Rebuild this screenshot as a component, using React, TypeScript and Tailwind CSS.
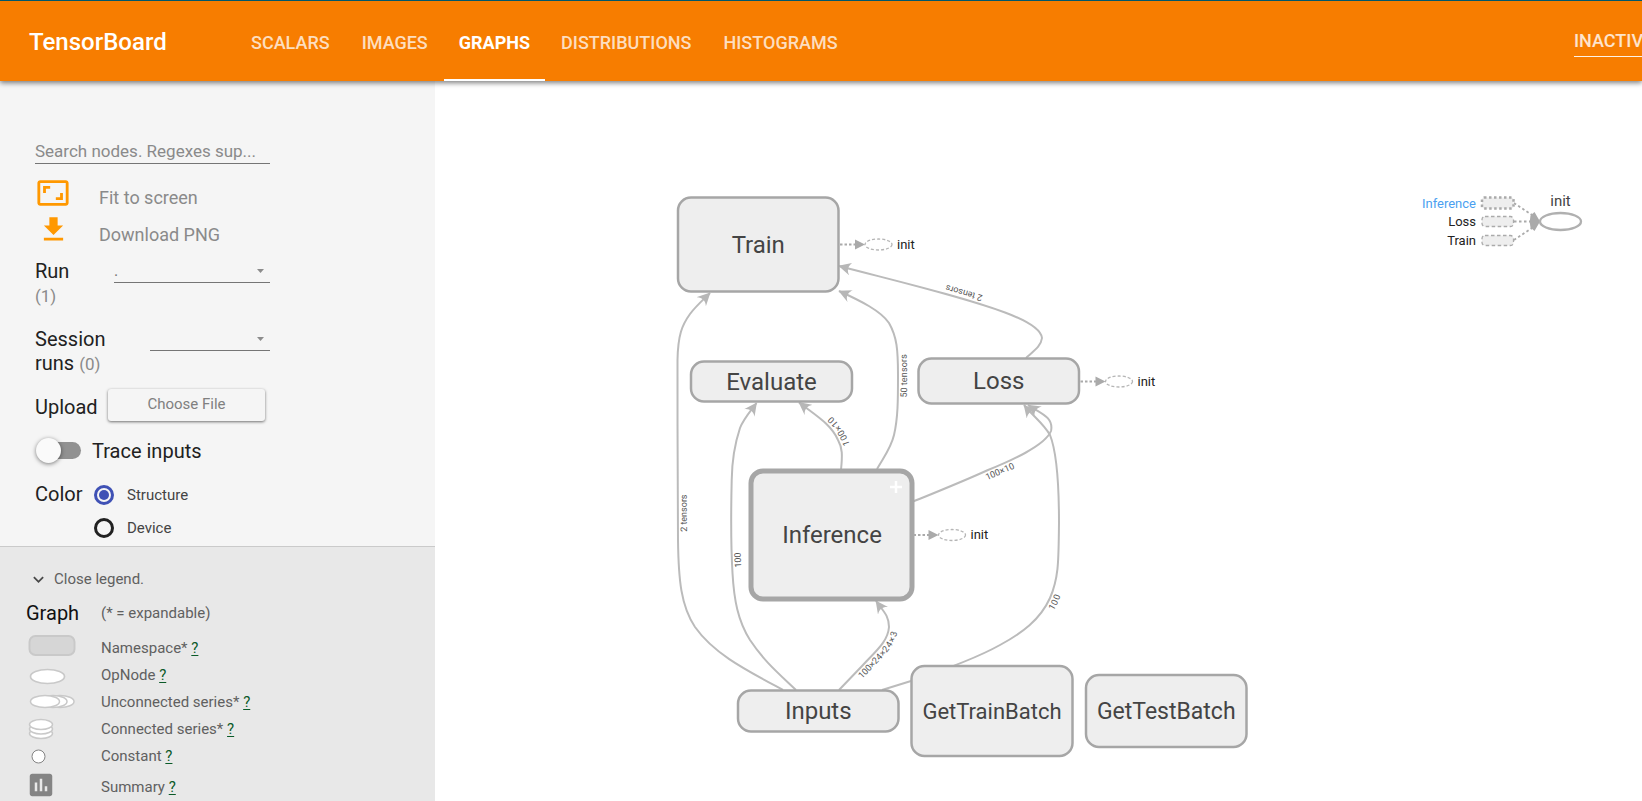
import React from "react";
import { MdAspectRatio, MdGetApp, MdKeyboardArrowDown, MdAssessment } from "react-icons/md";

const tabs = ["SCALARS", "IMAGES", "GRAPHS", "DISTRIBUTIONS", "HISTOGRAMS"];

function Header() {
  return (
    <header className="relative z-10 flex h-[81px] shrink-0 items-stretch overflow-visible border-t border-[#00576b] bg-[#f77d00] shadow-[0_2px_5px_rgba(0,0,0,0.5)]">
      <h1 className="flex w-[235px] shrink-0 items-center pt-0.5 pl-[29px] text-[24px] font-medium text-white">TensorBoard</h1>
      <nav className="flex">
        {tabs.map((tab) => (
          <a
            key={tab}
            href={"#" + tab.toLowerCase()}
            aria-current={tab === "GRAPHS" ? "page" : undefined}
            className={
              tab === "GRAPHS"
                ? "flex items-center border-b-2 border-white px-[15px] pt-1 text-[18px] font-bold text-white"
                : "flex items-center border-b-2 border-transparent px-4 pt-1 text-[18px] font-medium text-white/75"
            }
          >
            {tab}
          </a>
        ))}
      </nav>
      <div className="ml-auto w-[68px] overflow-hidden">
        <button className="mt-[26px] h-[30px] w-[160px] border-b border-white/90 pb-0.5 text-left text-[18px] font-medium text-white/80">
          INACTIVE
        </button>
      </div>
    </header>
  );
}

function Dropdown({ id, options }: { id: string; options: string[] }) {
  return (
    <div className="relative flex-1">
      <select id={id} className="block h-6 w-full appearance-none border-b border-[#757575] bg-transparent text-[16px] text-[#757575] outline-none">
        {options.map((o) => (
          <option key={o}>{o}</option>
        ))}
      </select>
      <svg className="pointer-events-none absolute top-[10px] right-[6px]" width="7" height="4" viewBox="0 0 7 4">
        <path d="M0 0H7L3.5 4Z" fill="#8c8c8c" />
      </svg>
    </div>
  );
}

function Controls() {
  return (
    <section className="h-[465px] shrink-0 pt-[57px] pl-[35px] text-[20px] leading-6 text-[#212121]">
      <div className="w-[235px]">
        <input
          aria-label="Search nodes"
          placeholder="Search nodes. Regexes sup..."
          className="block h-[26px] w-full border-b border-[#757575] bg-transparent text-[17px] outline-none placeholder:text-[#8a8a8a]"
        />
        <button className="mt-2.5 flex h-[37px] w-full items-center text-[18px] text-[#8a8a8a]">
          <MdAspectRatio className="ml-px size-[34px] text-[#ff9800]" />
          <span className="ml-[29px] pt-[11px]">Fit to screen</span>
        </button>
        <button className="flex h-[37px] w-full items-center text-[18px] text-[#8a8a8a]">
          <MdGetApp className="ml-0.5 size-[33px] text-[#ff9800]" />
          <span className="ml-[29px] pt-[11px]">Download PNG</span>
        </button>
        <div className="mt-[11px] flex h-12">
          <label htmlFor="run" className="w-[79px]">
            Run <br />
            <span className="text-[17px] leading-none text-[#8a8a8a]">(1)</span>
          </label>
          <Dropdown id="run" options={["."]} />
        </div>
        <div className="mt-5 flex h-12">
          <label htmlFor="session" className="w-[115px]">
            Session <br />
            runs <span className="text-[17px] leading-none text-[#8a8a8a]">(0)</span>
          </label>
          <Dropdown id="session" options={[""]} />
        </div>
        <div className="mt-3.5 flex h-8 items-center">
          <span className="w-[73px] pt-1">Upload</span>
          <button className="h-8 w-[157px] rounded-[3px] bg-[#f5f5f5] pb-0.5 text-[15px] text-[#808080] shadow-[0_1px_3px_rgba(0,0,0,0.55)]">
            Choose File
          </button>
        </div>
        <label className="mt-[17px] flex h-[25px] items-center">
          <input type="checkbox" role="switch" className="peer sr-only" />
          <span className="ml-[9px] flex h-[17px] w-[37px] items-center rounded-full bg-[#919191]">
            <span className="-ml-2 size-[25px] shrink-0 rounded-full bg-[#fafafa] shadow-[0_1px_4px_rgba(0,0,0,0.5)]" />
          </span>
          <span className="ml-[11px]">Trace inputs</span>
        </label>
        <fieldset className="mt-[15px] flex">
          <legend className="float-left h-[33px] w-[59px] pt-1">Color</legend>
          <div className="text-[15px] text-[#444]">
            <label className="flex h-[33px] items-center gap-[13px]">
              <input
                type="radio"
                name="color"
                defaultChecked
                className="size-5 appearance-none rounded-full border-[3px] border-[#3f51b5] bg-[#3f51b5] bg-clip-content p-0.5"
              />
              Structure
            </label>
            <label className="flex h-[33px] items-center gap-[13px]">
              <input type="radio" name="color" className="size-5 appearance-none rounded-full border-[3px] border-[#212121]" />
              Device
            </label>
          </div>
        </fieldset>
      </div>
    </section>
  );
}

function LegendRow({ label, className, children }: { label: string; className: string; children: React.ReactNode }) {
  return (
    <li className={className}>
      <span className="flex w-[73px] shrink-0 items-center">{children}</span>
      <span>
        {label}{" "}
        <a href="#help" className="text-[#0b5a28] underline underline-offset-2">
          ?
        </a>
      </span>
    </li>
  );
}

function Legend() {
  const row = "flex h-[27px] items-center";
  return (
    <section className="flex-1 border-t border-[#cacaca] bg-[#e8e8e8] pl-7 text-[15px] text-[#606060]">
      <button className="mt-5 flex h-6 items-center">
        <MdKeyboardArrowDown className="size-[21px] text-[#484848]" />
        <span className="ml-[5px]">Close legend.</span>
      </button>
      <div className="mt-2.5 -ml-0.5 flex h-6 items-center">
        <h2 className="w-[75px] text-[20px] text-[#111]">Graph</h2>
        <span>(* = expandable)</span>
      </div>
      <ul className="mt-[9px]">
        <LegendRow label="Namespace*" className="flex h-7 items-center">
          <svg width="48" height="26" viewBox="0 0 48 26">
            <rect x="1.5" y="1" width="45" height="19" rx="6" fill="#d6d6d6" stroke="#c9c9c9" strokeWidth="2" />
          </svg>
        </LegendRow>
        <LegendRow label="OpNode" className={row}>
          <svg width="47" height="20" viewBox="0 0 47 20">
            <ellipse cx="19.5" cy="10.5" rx="17" ry="7" fill="#fff" stroke="#c9c9c9" strokeWidth="1.7" />
          </svg>
        </LegendRow>
        <LegendRow label="Unconnected series*" className={row}>
          <svg width="50" height="20" viewBox="0 0 50 20" fill="#fff" stroke="#c9c9c9" strokeWidth="1.5">
            <ellipse cx="32" cy="8.5" rx="14" ry="6" />
            <ellipse cx="25" cy="8.5" rx="14" ry="6" />
            <ellipse cx="17" cy="8.5" rx="14.5" ry="6" />
          </svg>
        </LegendRow>
        <LegendRow label="Connected series*" className={row}>
          <svg width="30" height="24" viewBox="0 0 30 24" fill="#fff" stroke="#c9c9c9" strokeWidth="1.5">
            <ellipse cx="13" cy="15.5" rx="11.5" ry="5" />
            <ellipse cx="13" cy="11" rx="11.5" ry="5" />
            <ellipse cx="13" cy="6.5" rx="11.5" ry="5" />
          </svg>
        </LegendRow>
        <LegendRow label="Constant" className={row}>
          <svg width="20" height="20" viewBox="0 0 20 20">
            <circle cx="10.5" cy="9.5" r="6.5" fill="#fff" stroke="#848484" />
          </svg>
        </LegendRow>
        <LegendRow label="Summary" className="flex h-[34px] items-center">
          <MdAssessment className="-mt-1 -ml-0.5 size-[30px] text-[#848484]" />
        </LegendRow>
      </ul>
    </section>
  );
}

const nodes = [
  { name: "Train", x: 678, y: 197.5, w: 160.5, h: 94, size: 24 },
  { name: "Evaluate", x: 691, y: 361.5, w: 161, h: 40, size: 24 },
  { name: "Loss", x: 918.5, y: 358.5, w: 160.5, h: 45, size: 24 },
  { name: "Inputs", x: 738, y: 690.5, w: 160.5, h: 41, size: 24 },
  { name: "GetTrainBatch", x: 911.5, y: 666, w: 161, h: 90, size: 22 },
  { name: "GetTestBatch", x: 1086, y: 675, w: 160.5, h: 72, size: 23 },
];

const edges = [
  {
    id: "inputs-train",
    label: "2 tensors",
    at: "49.5%",
    d: "M783 690C746 670 714 654 695 627C681 606 678.5 580 678 540C677.5 500 677.5 420 677.5 360C678 335 682 325 690 314C696 306 703 300 710 293",
  },
  {
    id: "inputs-evaluate",
    label: "100",
    at: "48%",
    d: "M796 690C777 672 764 661 750 640C738 621 734 600 732.5 573C730.5 540 731 510 731.7 480C732 460 734 446 740 428C744 418 750 412 756.5 403",
  },
  {
    id: "inputs-inference",
    label: "100×24×24×3",
    at: "46%",
    d: "M839 690L863 665C877 650 888 641 889 627C889 616 884 612 876 601",
  },
  {
    id: "inference-evaluate",
    label: "100×10",
    at: "44%",
    d: "M841 470C842.5 455 842.5 448 838 440C831 424 815 415 799 402.5",
  },
  {
    id: "inference-train",
    label: "50 tensors",
    at: "46%",
    d: "M877 469C885 455 891 448 894 435C898 418 898 400 898 375C898 350 897 337 889 323C881 311 861 301 839 291",
  },
  {
    id: "inference-loss",
    label: "100×10",
    at: "47.5%",
    d: "M912 502C944 489 964 481 988 470C1010 461 1045 446 1051 431C1054 417 1040 413 1028 405",
  },
  {
    id: "inputs-loss",
    label: "100",
    at: "48.5%",
    d: "M882 690L911 681C941 671 975 659 1000 645C1022 633 1040 620 1050 598C1059 577 1058.5 560 1059 523C1059 490 1058 455 1050 435C1044 424 1033 416 1024 405",
  },
  {
    id: "loss-train",
    label: "2 tensors",
    at: "48%",
    d: "M1026 358C1035 350 1041 346 1042 338C1041 329 1025 320 1005 312.5C960 296 900 282 839 266",
  },
];

function InitNode({ x, y }: { x: number; y: number }) {
  return (
    <g>
      <path d={`M${x} ${y}h16`} stroke="#aaa" strokeWidth="1.8" strokeDasharray="2.5 2" fill="none" />
      <path d={`M${x + 15} ${y - 5}l10 5l-10 5z`} fill="#aaa" />
      <ellipse cx={x + 38.5} cy={y} rx="13.5" ry="5.5" fill="#fff" stroke="#b5b5b5" strokeWidth="1.3" strokeDasharray="3 2" />
      <text x={x + 57} y={y + 4} fontSize="13" fill="#222">
        init
      </text>
    </g>
  );
}

function Graph() {
  return (
    <svg className="h-full w-full" viewBox="435 81 1207 720" preserveAspectRatio="xMinYMin meet" role="img" aria-label="Main graph">
      <defs>
        <marker id="arrow" viewBox="0 0 10 10" refX="9.5" refY="5" markerWidth="13" markerHeight="13" markerUnits="userSpaceOnUse" orient="auto">
          <path d="M0 0L10 5L0 10C3 7 3 3 0 0" fill="#b7b7b7" />
        </marker>
      </defs>
      {edges.map((e) => (
        <g key={e.id}>
          <path id={e.id} d={e.d} fill="none" stroke="#bbb" strokeWidth="2" markerEnd="url(#arrow)" />
          <text fontSize="9" fill="#555" textAnchor="middle" dy="9">
            <textPath href={"#" + e.id} startOffset={e.at}>
              {e.label}
            </textPath>
          </text>
        </g>
      ))}
      {nodes.map((n) => (
        <g key={n.name}>
          <rect x={n.x} y={n.y} width={n.w} height={n.h} rx="13" fill="#eee" stroke="#a6a6a6" strokeWidth="2.5" />
          <text x={n.x + n.w / 2} y={n.y + n.h / 2 + 8} fontSize={n.size} fill="#444" textAnchor="middle">
            {n.name}
          </text>
        </g>
      ))}
      <rect x="751" y="471" width="161" height="128" rx="12" fill="#eee" stroke="#a6a6a6" strokeWidth="5" />
      <text x="832" y="543" fontSize="24" fill="#444" textAnchor="middle">
        Inference
      </text>
      <path d="M890 487h12M896 481v12" stroke="#fff" strokeWidth="2.5" />
      <InitNode x={840} y={244.5} />
      <InitNode x={1080.5} y={381.5} />
      <InitNode x={913.5} y={535} />

      <path d="M1514 203L1532 215M1514 221.5H1531M1514 240L1532 228" stroke="#aaa" fill="none" strokeWidth="1.8" strokeDasharray="2.5 2.5" />
      <path d="M1530.5 215.500L1534.500 212L1540 221.500L1534.500 231L1530.500 227.500Q1529 221.500 1530.500 215.500Z" fill="#aaa" />
      <rect x="1482" y="197.5" width="31.5" height="11" rx="2" fill="#eee" stroke="#aaa" strokeWidth="2.5" strokeDasharray="2.5 2.5" />
      <rect x="1482" y="216.5" width="31.5" height="10" rx="3" fill="#eee" stroke="#aaa" strokeWidth="1.3" strokeDasharray="3.5 2.5" />
      <rect x="1482" y="235.5" width="31.5" height="10" rx="3" fill="#eee" stroke="#aaa" strokeWidth="1.3" strokeDasharray="3.5 2.5" />
      <g fontSize="13" textAnchor="end" fill="#222">
        <text x="1476" y="208" fill="#4a9ff0">
          Inference
        </text>
        <text x="1476" y="226">Loss</text>
        <text x="1476" y="245">Train</text>
      </g>
      <ellipse cx="1560.5" cy="221.5" rx="20.5" ry="8.5" fill="#fff" stroke="#b0b0b0" strokeWidth="2.3" />
      <text x="1560.5" y="206" fontSize="15" textAnchor="middle" fill="#444">
        init
      </text>
    </svg>
  );
}

export default function App() {
  return (
    <div className="flex min-h-screen flex-col overflow-hidden bg-white font-[Roboto,sans-serif]">
      <Header />
      <div className="flex flex-1">
        <aside className="flex w-[435px] shrink-0 flex-col bg-[#f5f5f5]">
          <Controls />
          <Legend />
        </aside>
        <main className="min-w-0 flex-1">
          <Graph />
        </main>
      </div>
    </div>
  );
}
